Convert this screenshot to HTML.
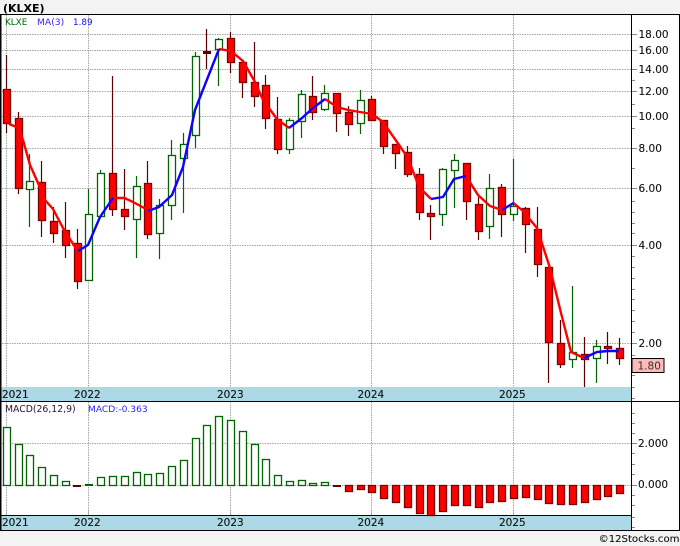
<!DOCTYPE html>
<html><head><meta charset="utf-8"><title>KLXE</title>
<style>
html,body{margin:0;padding:0;background:#f3f3f3}
svg{display:block}
text{font-family:"DejaVu Sans","Liberation Sans",sans-serif;font-size:10.5px;fill:#111;stroke:#111;stroke-width:.12px}
.g{fill:#fff;stroke:#006400}
.r{fill:#f00;stroke:#800000}
.c rect{stroke-width:1.3}
</style></head><body>
<svg width="680" height="546" viewBox="0 0 680 546" xmlns="http://www.w3.org/2000/svg">
<rect x="0" y="14" width="680" height="516" fill="#fff"/>
<text x="3" y="12" style="font-weight:bold;font-size:11px;fill:#000;stroke:none">(KLXE)</text>

<g fill="none" stroke="#a6a6a6" stroke-dasharray="1.500 1">
<path d="M2 34.5H632M2 50.5H632M2 69.5H632M2 91.5H632M2 116.5H632M2 148.5H632M2 188.5H632M2 245.5H632M2 343.5H632M2 443.5H632M2 485.5H632"/>
<path d="M6.5 15V387M88.5 15V387M230.5 15V387M371.5 15V387M513.5 15V387M6.5 402V515M88.5 402V515M230.5 402V515M371.5 402V515M513.5 402V515"/>
</g>
<path d="M6.5 510V515M88.5 510V515M230.5 510V515M371.5 510V515M513.5 510V515" stroke="#aaa" fill="none"/>

<!-- year bands -->
<rect x="1" y="387" width="631" height="14" fill="#add8e6"/>
<rect x="1" y="515" width="631" height="15" fill="#add8e6"/>

<g class="c">
<!-- red wicks -->
<path fill="none" stroke="#5f0000" stroke-width="1.2" d="M6.5 55V133M18.5 112V194M41.5 161V237M53.5 207V243M65.5 202V258M77.5 229V289M112.5 76V216M124.5 169V230M147.5 161V239M206.5 29V69M230.5 32V73M242.5 62V98M254.5 42V107M265.5 75V129M277.5 97V154M312.5 76V120M336.5 93V132M348.5 106V136M371.5 96V120M383.5 120V154M395.5 144V169M407.5 146V177M419.5 168V220M430.5 205V240M466.5 163V220M478.5 197V240M501.5 184V237M525.5 207V253M537.5 207V277M548.5 267V383M560.5 320V368M584.5 337V387M607.5 332V364M619.5 338V365"/>
<!-- green wicks -->
<path fill="none" stroke="#006400" stroke-width="1.2" d="M29.5 154V227M88.5 189V280M100.5 170V216M136.5 176V258M159.5 199V259M171.5 140V220M183.5 133V213M195.5 52V148M218.5 38V86M289.5 118V154M301.5 90V138M324.5 85V111M360.5 90V134M442.5 168V226M454.5 154V208M489.5 174V239M513.5 159V221M572.5 286V368M596.5 340V383"/>
<!-- red bodies -->
<g class="r">
<rect x="3.5" y="89.5" width="7" height="34"/>
<rect x="15.5" y="118.5" width="7" height="70"/>
<rect x="38.5" y="182.5" width="7" height="38"/>
<rect x="50.5" y="221.5" width="7" height="12"/>
<rect x="62.5" y="230.5" width="7" height="15"/>
<rect x="74.5" y="243.5" width="7" height="38"/>
<rect x="109.5" y="173.5" width="7" height="36"/>
<rect x="121.5" y="209.5" width="7" height="7"/>
<rect x="144.5" y="183.5" width="7" height="51"/>
<rect x="227.5" y="38.5" width="7" height="24"/>
<rect x="239.5" y="62.5" width="7" height="20"/>
<rect x="251.5" y="82.5" width="7" height="14"/>
<rect x="262.5" y="85.5" width="7" height="33"/>
<rect x="274.5" y="119.5" width="7" height="30"/>
<rect x="309.5" y="96.5" width="7" height="16"/>
<rect x="333.5" y="93.5" width="7" height="20"/>
<rect x="345.5" y="112.5" width="7" height="12"/>
<rect x="368.5" y="99.5" width="7" height="21"/>
<rect x="380.5" y="120.5" width="7" height="26"/>
<rect x="392.5" y="144.5" width="7" height="9"/>
<rect x="404.5" y="152.5" width="7" height="22"/>
<rect x="416.5" y="174.5" width="7" height="38"/>
<rect x="427.5" y="213.5" width="7" height="3"/>
<rect x="463.5" y="163.5" width="7" height="38"/>
<rect x="475.5" y="204.5" width="7" height="27"/>
<rect x="498.5" y="187.5" width="7" height="27"/>
<rect x="522.5" y="208.5" width="7" height="16"/>
<rect x="534.5" y="229.5" width="7" height="35"/>
<rect x="545.5" y="267.5" width="7" height="75"/>
<rect x="557.5" y="343.5" width="7" height="21"/>
<rect x="581.5" y="354.5" width="7" height="5"/>
<rect x="604.5" y="346.5" width="7" height="2"/>
<rect x="616.5" y="348.5" width="7" height="10"/>
</g>
<rect x="203" y="51" width="8" height="3" fill="#5f0000" stroke="none"/>
<!-- green bodies -->
<g class="g">
<rect x="26.5" y="181.5" width="7" height="8"/>
<rect x="85.5" y="214.5" width="7" height="66"/>
<rect x="97.5" y="173.5" width="7" height="43"/>
<rect x="133.5" y="186.5" width="7" height="33"/>
<rect x="156.5" y="205.5" width="7" height="28"/>
<rect x="168.5" y="155.5" width="7" height="50"/>
<rect x="180.5" y="144.5" width="7" height="14"/>
<rect x="192.5" y="56.5" width="7" height="79"/>
<rect x="215.5" y="39.5" width="7" height="10"/>
<rect x="286.5" y="120.5" width="7" height="29"/>
<rect x="298.5" y="94.5" width="7" height="27"/>
<rect x="321.5" y="93.5" width="7" height="16"/>
<rect x="357.5" y="100.5" width="7" height="23"/>
<rect x="439.5" y="169.5" width="7" height="45"/>
<rect x="451.5" y="160.5" width="7" height="10"/>
<rect x="486.5" y="188.5" width="7" height="38"/>
<rect x="510.5" y="206.5" width="7" height="8"/>
<rect x="569.5" y="352.5" width="7" height="7"/>
<rect x="593.5" y="346.5" width="7" height="12"/>
</g>
</g>

<!-- MA lines -->
<g fill="none" stroke-width="2.4" stroke-linejoin="round">
<g stroke="#f00">
<path d="M9 124L19 128L23 140L30 165L38 183L45 200L53 209L63 228L75 247L78 251"/>
<path d="M113 198L124.5 198L133 202L148 210"/>
<path d="M219 49L231 51L243 61L255 82L263 100L277 119L289 128"/>
<path d="M325 99L337 107L348 110L360 112L372 114L383 122L397 142L408 158L419 187L431 199"/>
<path d="M466 176L478 195L490 206L502 210"/>
<path d="M513.5 203L523 211L537 228L550 268L561 313L571 352L584 358"/>
</g>
<g stroke="#10f">
<path d="M78 251L88 245L100 217L113 198"/>
<path d="M148 211L159 207L172 195L183 167L195 110L219 49"/>
<path d="M289 128L302 118L313 108L325 99"/>
<path d="M431 199L443 197L454 179L466 176"/>
<path d="M502 210L513.5 203"/>
<path d="M584 358L597 352L608 351L619 351"/>
</g>
</g>

<!-- MACD bars -->
<g class="c">
<g class="g">
<rect x="3.5" y="427.5" width="7" height="58"/>
<rect x="15.5" y="444.5" width="7" height="41"/>
<rect x="26.5" y="455.5" width="7" height="30"/>
<rect x="38.5" y="467.5" width="7" height="18"/>
<rect x="50.5" y="475.5" width="7" height="10"/>
<rect x="62.5" y="481.5" width="7" height="4"/>
<rect x="97.5" y="477.5" width="7" height="8"/>
<rect x="109.5" y="476.5" width="7" height="9"/>
<rect x="121.5" y="476.5" width="7" height="9"/>
<rect x="133.5" y="472.5" width="7" height="13"/>
<rect x="144.5" y="474.5" width="7" height="11"/>
<rect x="156.5" y="473.5" width="7" height="12"/>
<rect x="168.5" y="466.5" width="7" height="19"/>
<rect x="180.5" y="460.5" width="7" height="25"/>
<rect x="192.5" y="438.5" width="7" height="47"/>
<rect x="203.5" y="425.5" width="7" height="60"/>
<rect x="215.5" y="416.5" width="7" height="69"/>
<rect x="227.5" y="420.5" width="7" height="65"/>
<rect x="239.5" y="431.5" width="7" height="54"/>
<rect x="251.5" y="444.5" width="7" height="41"/>
<rect x="262.5" y="459.5" width="7" height="26"/>
<rect x="274.5" y="475.5" width="7" height="10"/>
<rect x="286.5" y="481.5" width="7" height="4"/>
<rect x="298.5" y="480.5" width="7" height="5"/>
<rect x="309.5" y="483.5" width="7" height="2"/>
<rect x="321.5" y="482.5" width="7" height="3"/>
</g>
<rect x="73" y="485" width="8" height="2" fill="#5f0000"/>
<rect x="85" y="484" width="8" height="2" fill="#006400"/>
<rect x="333" y="485" width="8" height="2" fill="#5f0000"/>
<g class="r">
<rect x="345.5" y="485.5" width="7" height="6"/>
<rect x="357.5" y="485.5" width="7" height="4"/>
<rect x="368.5" y="485.5" width="7" height="7"/>
<rect x="380.5" y="485.5" width="7" height="13"/>
<rect x="392.5" y="485.5" width="7" height="17"/>
<rect x="404.5" y="485.5" width="7" height="22"/>
<rect x="416.5" y="485.5" width="7" height="28"/>
<rect x="427.5" y="485.5" width="7" height="30"/>
<rect x="439.5" y="485.5" width="7" height="26"/>
<rect x="451.5" y="485.5" width="7" height="20"/>
<rect x="463.5" y="485.5" width="7" height="20"/>
<rect x="475.5" y="485.5" width="7" height="22"/>
<rect x="486.5" y="485.5" width="7" height="17"/>
<rect x="498.5" y="485.5" width="7" height="16"/>
<rect x="510.5" y="485.5" width="7" height="13"/>
<rect x="522.5" y="485.5" width="7" height="12"/>
<rect x="534.5" y="485.5" width="7" height="14"/>
<rect x="545.5" y="485.5" width="7" height="18"/>
<rect x="557.5" y="485.5" width="7" height="19"/>
<rect x="569.5" y="485.5" width="7" height="19"/>
<rect x="581.5" y="485.5" width="7" height="17"/>
<rect x="593.5" y="485.5" width="7" height="14"/>
<rect x="604.5" y="485.5" width="7" height="11"/>
<rect x="616.5" y="485.5" width="7" height="8"/>
</g>
</g>

<!-- frame -->
<g shape-rendering="crispEdges" fill="none" stroke="#000">
<path d="M0 14.5H680M0 401.5H680M0 515.5H632M0 530.5H680M0.5 14V531M1 14V531M631.5 14V531M679.5 14V531"/>
</g>
<!-- right ticks -->
<g shape-rendering="crispEdges" fill="none" stroke="#888">
<path d="M632 34.5H637M632 50.5H637M632 69.5H637M632 91.5H637M632 116.5H637M632 148.5H637M632 188.5H637M632 245.5H637M632 343.5H637M632 443.5H637M632 485.5H637"/>
<path d="M632 80.5H635M632 104.5H635M632 128.5H635M632 168.5H635M632 201.5H635M632 212.5H635M632 223.5H635M632 233.5H635M632 256.5H635M632 267.5H635M632 278.5H635M632 289.5H635M632 299.5H635M632 310.5H635M632 321.5H635M632 332.5H635M632 355.5H635M632 375.5H635M632 387.5H635M632 398.5H635M632 413.5H635M632 423.5H635M632 433.5H635M632 453.5H635M632 464.5H635M632 474.5H635M632 495.5H635M632 505.5H635M632 517.5H635M632 527.5H635"/>
</g>

<text x="5" y="25" style="font-size:8.8px;fill:#006400;stroke:none">KLXE</text>
<text x="37" y="25" style="font-size:9.2px;fill:#3a1fff;stroke:none">MA(3)</text>
<text x="73" y="25" style="font-size:8.8px;fill:#1010ff;stroke:none">1.89</text>
<text x="5" y="412" style="font-size:9.3px;fill:#2a1030;stroke:none">MACD(26,12,9)</text>
<text x="88" y="412" style="font-size:9.1px;fill:#2a1fff;stroke:none">MACD:-0.363</text>

<text x="638.5" y="38">18.00</text>
<text x="638.5" y="54">16.00</text>
<text x="638.5" y="73">14.00</text>
<text x="638.5" y="95">12.00</text>
<text x="638.5" y="120">10.00</text>
<text x="638.5" y="152">8.00</text>
<text x="638.5" y="192">6.00</text>
<text x="638.5" y="249">4.00</text>
<text x="638.5" y="347">2.00</text>

<rect x="632" y="358.5" width="32" height="14" fill="#ffb9b9" stroke="#000" shape-rendering="crispEdges"/>
<text x="637.5" y="369.5" style="fill:#333;stroke:none">1.80</text>

<text x="638" y="447">2.000</text>
<text x="638" y="488">0.000</text>

<g style="font-size:10.6px">
<text x="2" y="398">2021</text><text x="74" y="398">2022</text><text x="217" y="398">2023</text><text x="357.500" y="398">2024</text><text x="499" y="398">2025</text>
<text x="2" y="526">2021</text><text x="74" y="526">2022</text><text x="217" y="526">2023</text><text x="357.500" y="526">2024</text><text x="499" y="526">2025</text>
</g>

<text x="679.500" y="542" text-anchor="end" style="font-size:10.1px">©12Stocks.com</text>
</svg>
</body></html>
